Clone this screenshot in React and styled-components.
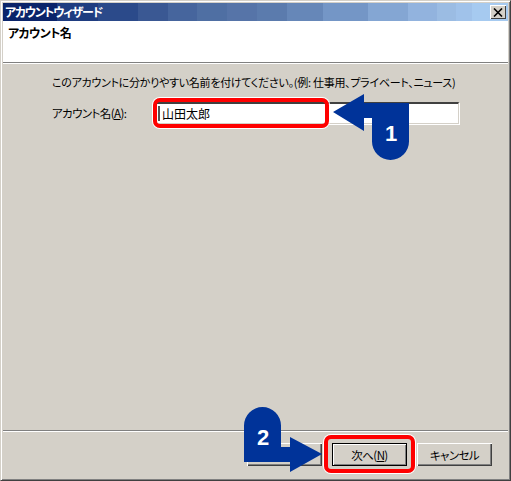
import React from 'react';
import styled, { createGlobalStyle } from 'styled-components';

const GlobalStyle = createGlobalStyle`
  html, body {
    margin: 0;
    padding: 0;
    background: #fff;
  }
`;

const Win = styled.div`
  position: relative;
  box-sizing: border-box;
  width: 511px;
  height: 481px;
  display: flex;
  flex-direction: column;
  padding: 2px;
  background: #d4d0c8;
  border-style: solid;
  border-width: 1px;
  border-color: #d4d0c8 #404040 #404040 #d4d0c8;
  box-shadow: inset 1px 1px 0 #fff, inset -1px -1px 0 #808080;
  font-family: "Noto Sans CJK JP", "Liberation Sans", sans-serif;
  font-feature-settings: "palt";
  font-size: 11.5px;
  letter-spacing: -0.6px;
  color: #000;
`;

const TitleBar = styled.div`
  position: relative;
  flex: none;
  height: 18px;
  display: flex;
`;

const Band = styled.div`
  flex: ${(p) => p.size} 0 0;
  background: ${(p) => p.color};
`;

const TitleText = styled.div`
  position: absolute;
  left: 2px;
  top: 0;
  line-height: 18px;
  font-size: 12px;
  font-weight: 700;
  letter-spacing: -1.3px;
  color: #fff;
`;

const CloseBox = styled.div`
  position: absolute;
  right: 2px;
  top: 2px;
  box-sizing: border-box;
  width: 16px;
  height: 14px;
  display: flex;
  align-items: center;
  justify-content: center;
  background: #d4d0c8;
  box-shadow: inset 1px 1px 0 #fff, inset -1px -1px 0 #404040;
`;

const Header = styled.div`
  flex: none;
  box-sizing: border-box;
  height: 41px;
  padding: 1px 5px;
  background: #fff;
  font-weight: 700;
  line-height: 22px;
  font-size: 12px;
`;

const Rule = styled.div`
  flex: none;
  height: 1px;
  background: #808080;
  border-bottom: 1px solid #fff;
`;

const Body = styled.div`
  flex: 1;
  padding: 9px 0 0 49px;
`;

const Hint = styled.div`
  line-height: 18px;
  font-size: 11px;
  letter-spacing: -0.28px;
  white-space: nowrap;
`;

const Field = styled.div`
  margin-top: 11px;
  display: flex;
  align-items: center;
`;

const FieldLabel = styled.div`
  width: 103px;
  white-space: nowrap;
`;

const TextBox = styled.div`
  box-sizing: border-box;
  width: 304px;
  height: 22px;
  display: flex;
  align-items: center;
  gap: 2px;
  padding-left: 1px;
  background: #fff;
  font-size: 12px;
  letter-spacing: 0;
  font-feature-settings: normal;
  border-style: solid;
  border-width: 2px 1px 1px 2px;
  border-color: #404040 #d4d0c8 #d4d0c8 #808080;
  box-shadow: 1px 1px 0 #fff;
`;

const Caret = styled.span`
  flex: none;
  width: 2px;
  height: 15px;
  background: #555;
`;

const Footer = styled.div`
  flex: none;
  display: flex;
  justify-content: flex-end;
  gap: 10px;
  padding: 11px 16px 12px 0;
`;

const Button = styled.div`
  box-sizing: border-box;
  width: 75px;
  height: 23px;
  display: flex;
  align-items: center;
  justify-content: center;
  background: #d4d0c8;
  white-space: nowrap;
  box-shadow: ${(p) =>
    p.$primary
      ? 'inset 0 0 0 1px #000, inset 2px 2px 0 #fff, inset -2px -2px 0 #808080'
      : 'inset 1px 1px 0 #fff, inset -1px -1px 0 #404040, inset -2px -2px 0 #808080'};
`;

const Highlight = styled.div`
  position: absolute;
  box-sizing: border-box;
  left: ${(p) => p.$left}px;
  top: ${(p) => p.$top}px;
  width: ${(p) => p.$width}px;
  height: ${(p) => p.$height}px;
  border: 4px solid #f00;
  border-radius: 7px;
  box-shadow: 0 0 0 1px #fff;
`;

const Callout = styled.svg`
  position: absolute;
  left: -1px;
  top: -1px;
  pointer-events: none;
`;

const CalloutNumber = styled.text`
  font-family: "Liberation Sans", sans-serif;
  font-size: 22px;
  font-weight: 700;
  letter-spacing: 0;
  fill: #fff;
  text-anchor: middle;
`;

const bands = [
  [54, '#0a246a'], [41, '#1f3d80'], [40, '#2b4a8a'], [30, '#3a5893'],
  [29, '#46659d'], [30, '#4f6fa3'], [30, '#5674a8'], [30, '#5b7bad'],
  [36, '#6687b8'], [45, '#7496c6'], [40, '#84a6d3'], [29, '#92b3de'],
  [19, '#9bbce3'], [16, '#a0c2ea'], [36, '#a6caf0'],
];

export default function App() {
  return (
    <>
      <GlobalStyle />
      <Win>
        <TitleBar>
          {bands.map(([size, color]) => (
            <Band key={color} size={size} color={color} />
          ))}
          <TitleText>アカウントウィザード</TitleText>
          <CloseBox>
            <svg width="10" height="9" viewBox="0 0 10 9">
              <path d="M1 0.5 L9 8.5 M9 0.5 L1 8.5" stroke="#000" strokeWidth="1.6" />
            </svg>
          </CloseBox>
        </TitleBar>
        <Header>アカウント名</Header>
        <Rule />
        <Body>
          <Hint>このアカウントに分かりやすい名前を付けてください。(例: 仕事用、プライベート、ニュース)</Hint>
          <Field>
            <FieldLabel>アカウント名(<u>A</u>):</FieldLabel>
            <TextBox>
              <Caret />
              山田太郎
            </TextBox>
          </Field>
        </Body>
        <Rule />
        <Footer>
          <Button />
          <Button $primary>次へ(<u>N</u>)</Button>
          <Button>キャンセル</Button>
        </Footer>

        <Highlight $left={152} $top={97} $width={176} $height={30} />
        <Highlight $left={323} $top={434} $width={91} $height={38} />

        <Callout width="511" height="481" viewBox="0 0 511 481">
          <path
            d="M333 112 L364 94 V103 H409 V141.5 A18.5 18.5 0 0 1 372 141.5 V118 H364 V131 Z"
            fill="#003399"
          />
          <CalloutNumber x="391" y="141">1</CalloutNumber>
          <path
            d="M244 425.5 A18.5 18.5 0 0 1 281 425.5 V447 H290 V437 L322 454 L290 472 V462 H244 Z"
            fill="#003399"
          />
          <CalloutNumber x="263" y="445">2</CalloutNumber>
        </Callout>
      </Win>
    </>
  );
}
